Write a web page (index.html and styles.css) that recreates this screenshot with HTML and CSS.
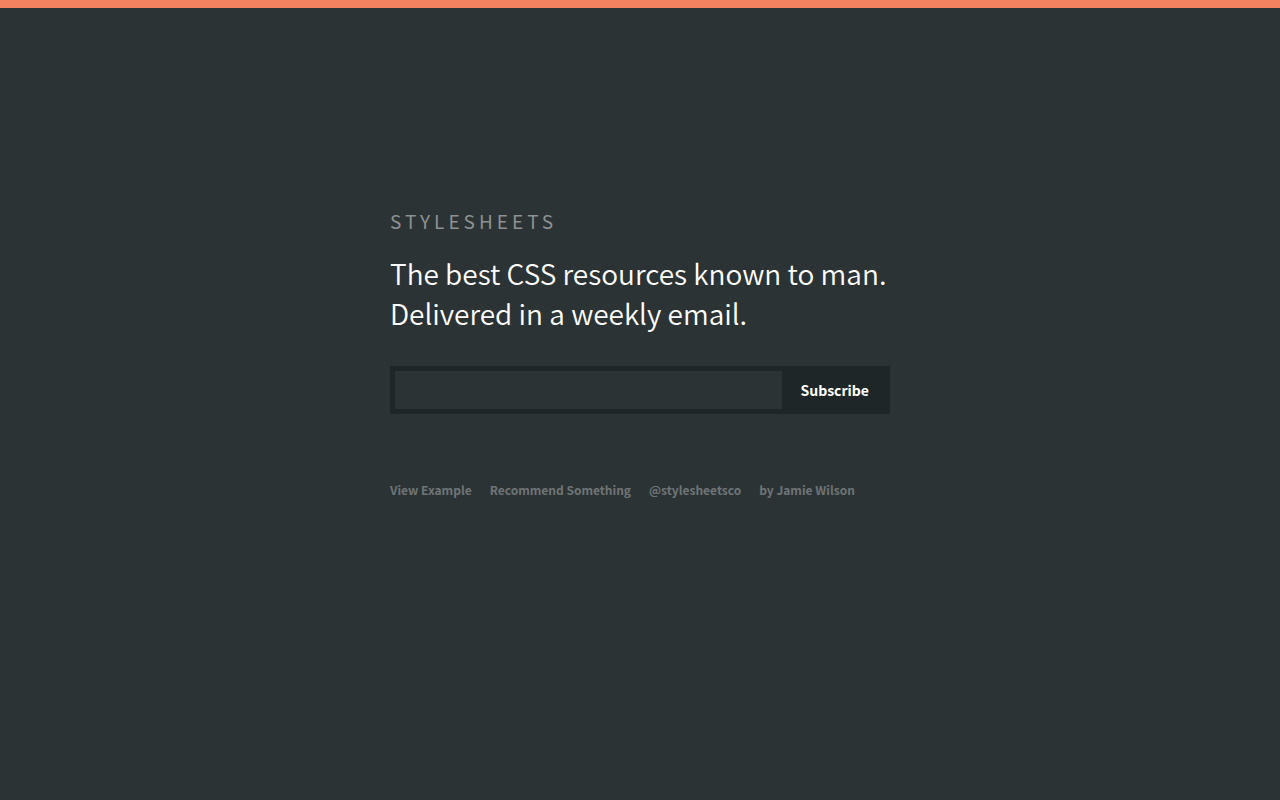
FILE: index.html
```html
<!DOCTYPE html>
<html lang="en">
<head>
<meta charset="utf-8">
<meta name="viewport" content="width=device-width, initial-scale=1">
<title>Stylesheets</title>
<link rel="stylesheet" href="styles.css">
</head>
<body>
<main class="page">
  <h1 class="brand">STYLESHEETS</h1>
  <p class="tagline">The best CSS resources known to man. Delivered in a weekly email.</p>
  <form class="subscribe">
    <input class="subscribe-email" type="email" name="email" aria-label="Email address">
    <button class="subscribe-button" type="submit">Subscribe</button>
  </form>
  <nav class="links">
    <a href="#example">View Example</a>
    <a href="#recommend">Recommend Something</a>
    <a href="#twitter">@stylesheetsco</a>
    <a href="#author">by Jamie Wilson</a>
  </nav>
</main>
</body>
</html>
```

FILE: styles.css
```css
* {
  box-sizing: border-box;
}

body {
  margin: 0;
  border-top: 8px solid #f48260;
  background: #2c3335;
  color: #fff;
  font-family: "Noto Sans CJK SC", "Noto Sans", sans-serif;
}

.page {
  max-width: 500px;
  margin: 0 auto;
  padding-top: 199px;
}

.brand {
  margin: 0;
  color: #8d9192;
  font-size: 19px;
  font-weight: 400;
  line-height: 28px;
  letter-spacing: 4px;
}

.tagline {
  margin: 18px 0 0;
  font-size: 28px;
  font-weight: 350;
  line-height: 40px;
}

.subscribe {
  display: flex;
  margin-top: 33px;
  padding: 5px;
  background: #1f2628;
}

.subscribe-email {
  flex: 1;
  min-width: 0;
  height: 38px;
  padding: 0 12px;
  border: 0;
  border-radius: 0;
  background: #2c3335;
  color: #fff;
  font: inherit;
  font-size: 14px;
}

.subscribe-button {
  padding: 0 16px 0 19px;
  border: 0;
  background: transparent;
  color: #fff;
  font: inherit;
  font-size: 14px;
  font-weight: 700;
}

.links {
  display: flex;
  flex-wrap: wrap;
  gap: 8px 18px;
  margin-top: 66px;
  font-size: 12px;
  font-weight: 700;
  line-height: 20px;
}

.links a {
  color: #6f7576;
  text-decoration: none;
}
```
